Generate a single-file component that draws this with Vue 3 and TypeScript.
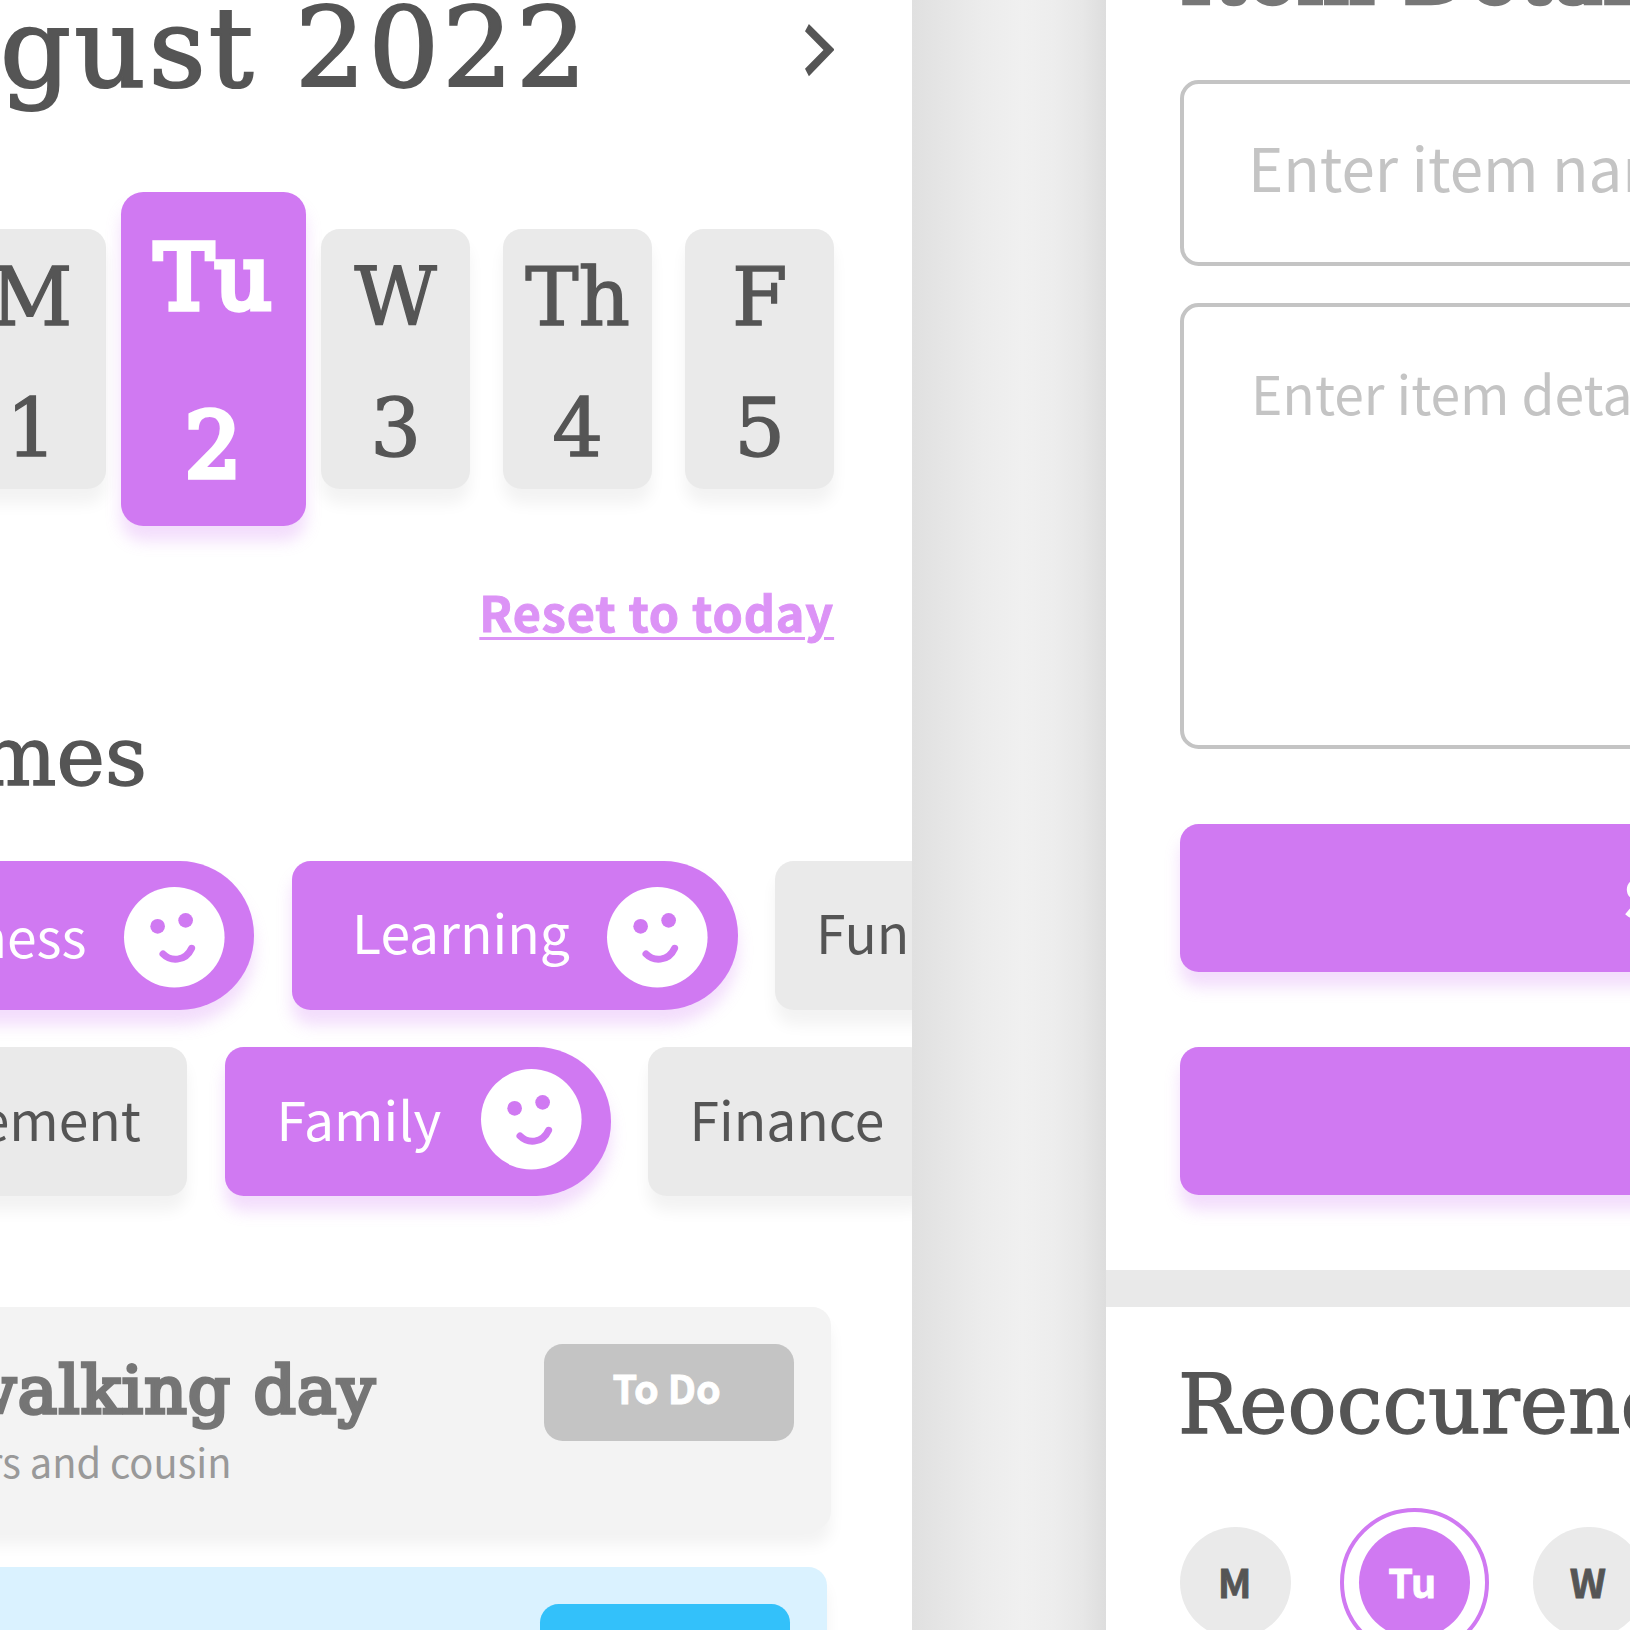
<script setup lang="ts">
interface Day { label: string; date: string; active?: boolean }
interface Chip { label: string; active?: boolean; cls: string }

const days: Day[] = [
  { label: 'M', date: '1' },
  { label: 'Tu', date: '2', active: true },
  { label: 'W', date: '3' },
  { label: 'Th', date: '4' },
  { label: 'F', date: '5' },
]

const themeRows: Chip[][] = [
  [
    { label: 'ness', active: true, cls: 'c-ness' },
    { label: 'Learning', active: true, cls: 'c-learning' },
    { label: 'Fun', cls: 'c-fun' },
  ],
  [
    { label: 'ement', cls: 'c-ement' },
    { label: 'Family', active: true, cls: 'c-family' },
    { label: 'Finance', cls: 'c-finance' },
  ],
]

const repeatDays: Day[] = [
  { label: 'M', date: '' },
  { label: 'Tu', date: '', active: true },
  { label: 'W', date: '' },
]
</script>

<template>
  <main class="board">
    <section class="screen planner">
      <header class="month">
        <h1>gust 2022</h1>
        <svg class="chevron" viewBox="0 0 29.6 52.2">
          <path d="M3.9 0 29.6 25.7 3.9 52.2 0 44.8 18.5 25.9 0 7.2Z" fill="#555" />
        </svg>
      </header>

      <div class="days">
        <div v-for="d in days" :key="d.date" class="day" :class="{ active: d.active }">
          <span>{{ d.label }}</span>
          <span>{{ d.date }}</span>
        </div>
      </div>

      <a class="reset">Reset to today</a>

      <h2 class="themes-title">mes</h2>

      <div class="themes">
        <div v-for="(row, i) in themeRows" :key="i" class="chip-row">
          <div v-for="c in row" :key="c.label" class="chip" :class="[c.cls, { on: c.active }]">
            <span>{{ c.label }}</span>
            <svg v-if="c.active" class="face" viewBox="0 0 302 302">
              <circle cx="151" cy="151" r="151" fill="#fff" />
              <circle cx="101" cy="118" r="22" fill="#d079f2" />
              <circle cx="185" cy="100" r="22" fill="#d079f2" />
              <path d="M117 201C138 223 184 226 203 184" fill="none" stroke="#d079f2" stroke-width="21" stroke-linecap="round" />
            </svg>
          </div>
        </div>
      </div>

      <div class="tasks">
        <article class="task">
          <div class="task-text">
            <h3>walking day</h3>
            <p>rs and cousin</p>
          </div>
          <span class="badge">To Do</span>
        </article>
        <article class="task progress">
          <span class="badge"></span>
        </article>
      </div>
    </section>

    <div class="gutter"></div>

    <section class="screen editor">
      <div class="details">
        <h2 class="details-title">Item Detail</h2>
        <div class="field name">Enter item nam</div>
        <div class="field note">Enter item detail</div>
        <div class="button"><span>S</span></div>
        <div class="button"></div>
      </div>
      <div class="divider"></div>
      <div class="repeat">
        <h2 class="repeat-title">Reoccurenc</h2>
        <div class="repeat-days">
          <div v-for="d in repeatDays" :key="d.label" class="ring" :class="{ active: d.active }">
            <span class="dot">{{ d.label }}</span>
          </div>
        </div>
      </div>
    </section>
  </main>
</template>

<style>
body {
  overflow: hidden;
}
</style>

<style scoped>
* {
  box-sizing: border-box;
}
.board {
  display: flex;
  width: 1630px;
  height: 1630px;
  overflow: hidden;
  background: #fff;
  color: #555;
  font-family: "Noto Sans CJK SC", "Noto Sans", sans-serif;
  white-space: nowrap;
}
h1, h2, h3, p {
  margin: 0;
}
h1, h2, h3, .day {
  font-family: "DejaVu Serif", serif;
  font-weight: 400;
  -webkit-text-stroke: 1.4px currentColor;
}
.screen {
  flex: none;
  overflow: hidden;
  background: #fff;
}
.planner {
  width: 912.4px;
  display: flex;
  flex-direction: column;
}
.planner > * {
  flex-shrink: 0;
}
.month {
  display: flex;
  justify-content: space-between;
  height: 228.7px;
  padding-right: 78.3px;
}
h1 {
  font-size: 111px;
  line-height: 130px;
  margin-top: -17px;
  letter-spacing: 3.1px;
  -webkit-text-stroke-width: 2.2px;
}
.chevron {
  width: 29.6px;
  height: 52.2px;
  margin-top: 24.4px;
}
.days {
  display: flex;
  justify-content: flex-end;
  gap: 33.4px;
  height: 260.2px;
  padding-right: 78.3px;
}
.day {
  flex: none;
  width: 148.7px;
  height: 260.2px;
  border-radius: 18.6px;
  background: #eaeaea;
  box-shadow: 0 14.9px 14.9px rgba(0, 0, 0, 0.05);
  display: flex;
  flex-direction: column;
  align-items: center;
  padding-top: 19px;
  gap: 31px;
  font-size: 80px;
  line-height: 100px;
}
.day.active {
  width: 185.9px;
  height: 334.5px;
  margin: -37.2px -18.6px 0;
  border-radius: 22.3px;
  background: #d079f2;
  box-shadow: 0 14.9px 14.9px rgba(208, 121, 242, 0.25);
  color: #fff;
  font-size: 89px;
  line-height: 120px;
  padding-top: 26px;
  gap: 48px;
  letter-spacing: 1px;
  -webkit-text-stroke-width: 5.5px;
}
.reset {
  align-self: flex-end;
  margin: 84.5px 78.3px 0 0;
  height: 76px;
  line-height: 76px;
  font-size: 48.5px;
  letter-spacing: 0.9px;
  font-weight: 700;
  color: #dc93f6;
  -webkit-text-stroke: 1px currentColor;
  text-decoration: underline;
  text-decoration-thickness: 2.5px;
  text-underline-offset: 5px;
}
.themes-title {
  width: 147px;
  display: flex;
  justify-content: flex-end;
  margin-top: 53px;
  height: 158.6px;
  font-size: 81.8px;
  line-height: 110px;
}
.themes {
  display: flex;
  flex-direction: column;
  gap: 37.5px;
}
.chip-row {
  display: flex;
  gap: 37.3px;
  margin-left: -40px;
}
.chip {
  flex: none;
  display: flex;
  align-items: center;
  height: 148.7px;
  border-radius: 18.6px;
  background: #eaeaea;
  box-shadow: 0 14.9px 14.9px rgba(0, 0, 0, 0.05);
  font-size: 53.4px;
  line-height: 74px;
}
.chip span {
  padding-bottom: 8px;
}
.chip.on {
  justify-content: space-between;
  padding-right: 29.7px;
  border-radius: 18.6px 74.3px 74.3px 18.6px;
  background: #d079f2;
  box-shadow: 0 14.9px 14.9px rgba(208, 121, 242, 0.25);
  color: #fff;
}
.face {
  flex: none;
  overflow: visible;
  width: 100.6px;
  height: 100.6px;
  margin-top: 4.4px;
}
.c-ness {
  width: 294.3px;
}
.c-ness span {
  width: 126.5px;
  display: flex;
  justify-content: flex-end;
  padding-bottom: 1px;
}
.c-learning {
  width: 446px;
  padding-left: 60.5px;
}
.c-fun {
  width: 200px;
  padding-left: 41px;
}
.c-ement {
  width: 227.3px;
}
.c-ement span {
  width: 181px;
  display: flex;
  justify-content: flex-end;
}
.c-family {
  width: 386.6px;
  padding-left: 52px;
}
.c-family .face {
  margin-top: -4px;
}
.c-finance {
  width: 280px;
  padding-left: 41px;
}
.tasks {
  display: flex;
  flex-direction: column;
  gap: 37px;
  margin: 111.4px 0 0 -40px;
}
.task {
  flex: none;
  display: flex;
  justify-content: space-between;
  width: 870.6px;
  height: 223px;
  padding: 37px 37px 0 40px;
  border-radius: 18.6px;
  background: #f3f3f3;
  box-shadow: 0 14.9px 14.9px rgba(0, 0, 0, 0.05);
}
.task.progress {
  width: 867px;
  justify-content: flex-end;
  background: #daf2ff;
}
.task-text {
  width: 376px;
  display: flex;
  flex-direction: column;
  align-items: flex-end;
}
h3 {
  margin-top: 4px;
  font-size: 66.2px;
  line-height: 86px;
  letter-spacing: 1.1px;
  color: #757575;
  -webkit-text-stroke-width: 3.6px;
}
p {
  width: 231.5px;
  margin-top: -2.5px;
  align-self: flex-start;
  display: flex;
  justify-content: flex-end;
  font-size: 39.8px;
  line-height: 58px;
  color: #999;
}
.badge {
  width: 250px;
  height: 97px;
  padding-right: 4px;
  border-radius: 18.6px;
  background: #c4c4c4;
  color: #fff;
  font-size: 39.6px;
  font-weight: 700;
  line-height: 86px;
  text-align: center;
  -webkit-text-stroke: 0.8px currentColor;
}
.progress .badge {
  background: #33c1fa;
}
.gutter {
  flex: none;
  width: 193.2px;
  background: linear-gradient(90deg, #e0e0e0 0%, #e6e6e6 18%, #ececec 36%, #f0f0f0 57%, #ededed 73%, #e7e7e7 88%, #dddddd 100%);
}
.editor {
  width: 524.4px;
}
.details {
  display: flow-root;
  height: 1270.2px;
  padding-left: 74.3px;
}
.details-title {
  height: 80px;
  line-height: 100px;
  margin-top: -75px;
  margin-bottom: 75px;
  font-size: 81.8px;
  letter-spacing: 1.2px;
  color: #777;
  -webkit-text-stroke-width: 4.5px;
}
.field {
  width: 600px;
  border: 4px solid #c4c4c4;
  border-radius: 18.6px;
  color: #c4c4c4;
}
.name {
  height: 186px;
  padding: 40px 0 0 64px;
  font-size: 60px;
  line-height: 84px;
}
.note {
  height: 446.2px;
  margin-top: 37.2px;
  padding: 45.5px 0 0 67px;
  font-size: 53.4px;
  line-height: 78px;
}
.button {
  width: 960px;
  height: 148.5px;
  margin-top: 74.4px;
  padding-left: 443px;
  border-radius: 18.6px;
  background: #d079f2;
  box-shadow: 0 14.9px 14.9px rgba(208, 121, 242, 0.25);
  color: #fff;
  font-size: 53.5px;
  font-weight: 700;
  line-height: 143px;
}
.divider {
  height: 37px;
  background: #e9e9e9;
}
.repeat {
  padding-left: 74.3px;
}
.repeat-title {
  height: 201px;
  margin-left: -2px;
  padding-top: 42.5px;
  font-size: 81.6px;
  line-height: 110px;
}
.repeat-days {
  display: flex;
  margin-left: -18.5px;
  gap: 27.9px;
}
.ring {
  flex: none;
  width: 148.7px;
  height: 148.7px;
  padding: 14.6px;
  border: 4px solid transparent;
  border-radius: 50%;
}
.ring.active {
  margin: 0 -2px 0 2px;
  border-color: #d079f2;
}
.dot {
  display: block;
  width: 111.5px;
  height: 111.5px;
  padding-right: 2px;
  border-radius: 50%;
  background: #eaeaea;
  font-size: 39.6px;
  font-weight: 700;
  line-height: 107px;
  text-align: center;
  -webkit-text-stroke: 0.8px currentColor;
}
.active .dot {
  padding-right: 4px;
  background: #d079f2;
  color: #fff;
}
</style>
